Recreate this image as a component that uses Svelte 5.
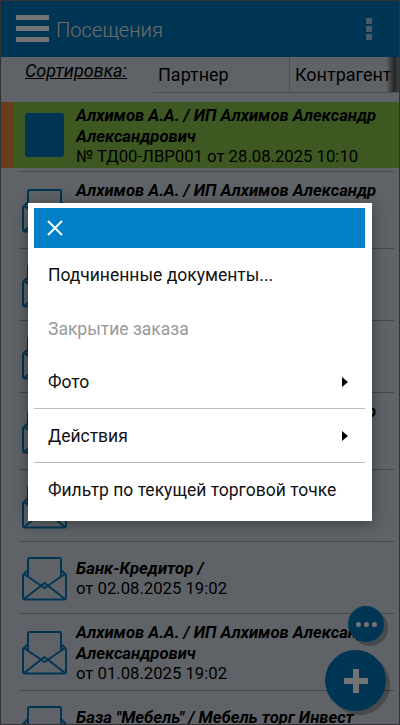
<script>
  const rows = [
    { name: "Алхимов А.А. / ИП Алхимов Александр Александрович", doc: "№ ТД00-ЛВР001 от 28.08.2025 10:10", current: true },
    { name: "Алхимов А.А. / ИП Алхимов Александр Александрович", doc: "от 27.08.2025 19:02" },
    {},
    {},
    { name: "Алхимов А.А. / ИП Алхимов Александр Александрович", doc: "от 12.08.2025 19:02" },
    {},
    { name: "Банк-Кредитор /", doc: "от 02.08.2025 19:02" },
    { name: "Алхимов А.А. / ИП Алхимов Александр Александрович", doc: "от 01.08.2025 19:02" },
    { name: 'База "Мебель" / Мебель торг Инвест', doc: "от 01.08.2025 12:00" }
  ];

  const menu = [
    { label: "Подчиненные документы...", h: 54 },
    { label: "Закрытие заказа", h: 53, disabled: true },
    { label: "Фото", h: 54, arrow: true, line: true },
    { label: "Действия", h: 54, arrow: true, line: true },
    { label: "Фильтр по текущей торговой точке", h: 54 }
  ];
</script>

<div class="screen">
  <header class="appbar">
    <div class="burger"><span></span><span></span><span></span></div>
    <div class="title">Посещения</div>
    <div class="kebab"><span></span><span></span><span></span></div>
  </header>

  <div class="sortbar">
    <div class="sort-label">Сортировка:</div>
    <div class="tabs">
      <div class="tab first">Партнер</div>
      <div class="tab">Контрагент</div>
    </div>
    <div class="fade"></div>
  </div>

  <div class="list">
    {#each rows as row}
      <div class="row" class:current={row.current}>
        <div class="main">
          {#if row.current}<div class="marker"></div>{/if}
          <div class="icon">
            {#if row.current}
              <div class="square"></div>
            {:else}
              <svg width="45" height="44" viewBox="0 0 45 44" fill="none" stroke="#0076bb" stroke-width="2" stroke-linejoin="round">
                <path d="M6 19V2.5A1.5 1.5 0 0 1 7.500 1h30A1.500 1.500 0 0 1 39 2.500V19" />
                <path d="M6 13 1.500 17.500a2 2 0 0 0-.5 1.500v21.500a2 2 0 0 0 2 2h39a2 2 0 0 0 2-2V19a2 2 0 0 0-.5-1.500L39 13" />
                <path d="M2 17l20.500 14L43 17M2 42l20.500-16L43 42" />
              </svg>
            {/if}
          </div>
          <div class="text">
            {#if row.name}<div class="name">{row.name}</div>{/if}
            {#if row.doc}<div class="doc">{row.doc}</div>{/if}
          </div>
        </div>
      </div>
    {/each}
  </div>

  <button class="fab small"><i></i><i></i><i></i></button>
  <button class="fab big">
    <svg width="24" height="24" viewBox="0 0 24 24"><path d="M9 0h6v9h9v6h-9v9H9v-9H0V9h9z" fill="#fff" /></svg>
  </button>

  <div class="scrim"></div>

  <div class="dialog">
    <div class="dialog-head">
      <svg width="16" height="16" viewBox="0 0 16 16" stroke="#fff" stroke-width="2" fill="none"><path d="M1 1l14 14M15 1 1 15" /></svg>
    </div>
    {#each menu as item}
      <div class="item" class:disabled={item.disabled} class:line={item.line} style="height: {item.h}px">
        <span>{item.label}</span>
        {#if item.arrow}<b class="arrow"></b>{/if}
      </div>
    {/each}
  </div>
</div>

<style>
  :global(body) {
    margin: 0;
  }

  .screen {
    position: relative;
    width: 400px;
    height: 725px;
    overflow: hidden;
    background: #d3dce4;
    font-family: Roboto, "Noto Sans", sans-serif;
    color: #000;
  }

  .appbar {
    height: 57px;
    box-sizing: border-box;
    padding: 15px 0 0 16px;
    display: flex;
    align-items: flex-start;
    background: #0076bb;
  }

  .burger {
    width: 33px;
    height: 27px;
    display: flex;
    flex-direction: column;
    justify-content: space-between;
    flex: none;
  }

  .burger span {
    height: 5px;
    background: #fff;
  }

  .title {
    margin: -1px 0 0 7px;
    font-size: 20.2px;
    line-height: 32px;
    font-weight: 300;
    color: #eee;
  }

  .kebab {
    margin: 3px 0 0 auto;
    padding-right: 28px;
    display: flex;
    flex-direction: column;
    gap: 2px;
  }

  .kebab span {
    width: 6px;
    height: 6px;
    background: rgba(255, 255, 255, 0.6);
  }

  .sortbar {
    position: relative;
    height: 45px;
    display: flex;
  }

  .sort-label {
    width: 153px;
    box-sizing: border-box;
    padding: 3px 0 0 25px;
    font-size: 18px;
    line-height: 22px;
    font-style: italic;
    text-decoration: underline;
    white-space: nowrap;
  }

  .tabs {
    flex: 1;
    height: 35px;
    display: flex;
    border-bottom: 1px solid #a9b0b8;
    white-space: nowrap;
    overflow: hidden;
  }

  .tab {
    padding: 6px 0 0 5px;
    font-size: 18px;
    line-height: 24px;
  }

  .tab.first {
    width: 131px;
    border-right: 1px solid #a9b0b8;
  }

  .fade {
    position: absolute;
    top: 0;
    right: 0;
    width: 14px;
    height: 35px;
    background: linear-gradient(to right, rgba(90, 90, 90, 0), #555 60%, rgba(90, 90, 90, 0.5));
  }

  .main {
    display: flex;
    align-items: center;
    box-sizing: border-box;
    min-height: 72px;
    margin: 0 6px 0 19px;
    padding: 8px 0 6px;
    border-bottom: 1px solid #9aa0a8;
  }

  .row.current + .row .main {
    padding-top: 7px;
  }

  .row.current {
    height: 71px;
    box-sizing: border-box;
    border-bottom: 1px solid transparent;
    position: relative;
  }

  .row.current .main {
    height: 66px;
    min-height: 0;
    margin: 0;
    padding: 0;
    align-items: stretch;
    background: #8bc34a;
    border-bottom: 0;
  }

  /* разделитель под выделенной строкой */
  .row.current::after {
    content: "";
    position: absolute;
    left: 19px;
    right: 6px;
    bottom: 0;
    height: 1px;
    background: #9aa0a8;
  }

  .marker {
    width: 13px;
    margin-left: 1px;
    flex: none;
    background: #ec873a;
  }

  .icon {
    width: 57px;
    flex: none;
    padding-left: 3px;
    box-sizing: border-box;
    display: flex;
  }

  .row.current .icon {
    width: 62px;
    padding: 11px 0 0 11px;
  }

  .square {
    width: 39px;
    height: 44px;
    border-radius: 3px;
    background: #0076bb;
  }

  .text {
    min-width: 0;
    font-size: 16.7px;
    padding-right: 12px;
  }

  .row.current .text {
    padding-top: 3px;
    padding-right: 18px;
  }

  .name {
    font-weight: 700;
    font-style: italic;
    line-height: 21px;
  }

  .doc {
    line-height: 20px;
  }

  .fab {
    position: absolute;
    border: 0;
    padding: 0;
    border-radius: 50%;
    background: #0076bb;
    box-shadow: 4px 4px 0 rgba(0, 0, 0, 0.25);
    display: flex;
    align-items: center;
    justify-content: center;
  }

  .fab.small {
    left: 348px;
    top: 606px;
    width: 36px;
    height: 36px;
    gap: 3px;
  }

  .fab.small i {
    width: 5px;
    height: 5px;
    border-radius: 50%;
    background: #fff;
  }

  .fab.big {
    left: 325px;
    top: 650px;
    width: 61px;
    height: 61px;
  }

  .scrim {
    position: absolute;
    inset: 0;
    box-sizing: border-box;
    border: 1px solid #333;
    background: rgba(0, 0, 0, 0.55);
  }

  .dialog {
    position: absolute;
    left: 28px;
    top: 203px;
    width: 344px;
    height: 318px;
    box-sizing: border-box;
    padding: 5px 7px 0 6px;
    background: #fff;
    box-shadow: 0 2px 14px rgba(0, 0, 0, 0.4);
  }

  .dialog-head {
    height: 40px;
    padding-left: 13px;
    box-sizing: border-box;
    display: flex;
    align-items: center;
    background: #0280c8;
  }

  .item {
    box-sizing: border-box;
    padding: 0 17px 0 14px;
    display: flex;
    align-items: center;
    justify-content: space-between;
    font-size: 17.5px;
    color: #111;
  }

  .item.disabled {
    color: #999;
  }

  .item.line {
    border-bottom: 1px solid #bbb;
  }

  .arrow {
    width: 0;
    height: 0;
    border-left: 6px solid #000;
    border-top: 5.500px solid transparent;
    border-bottom: 5.500px solid transparent;
  }
</style>
